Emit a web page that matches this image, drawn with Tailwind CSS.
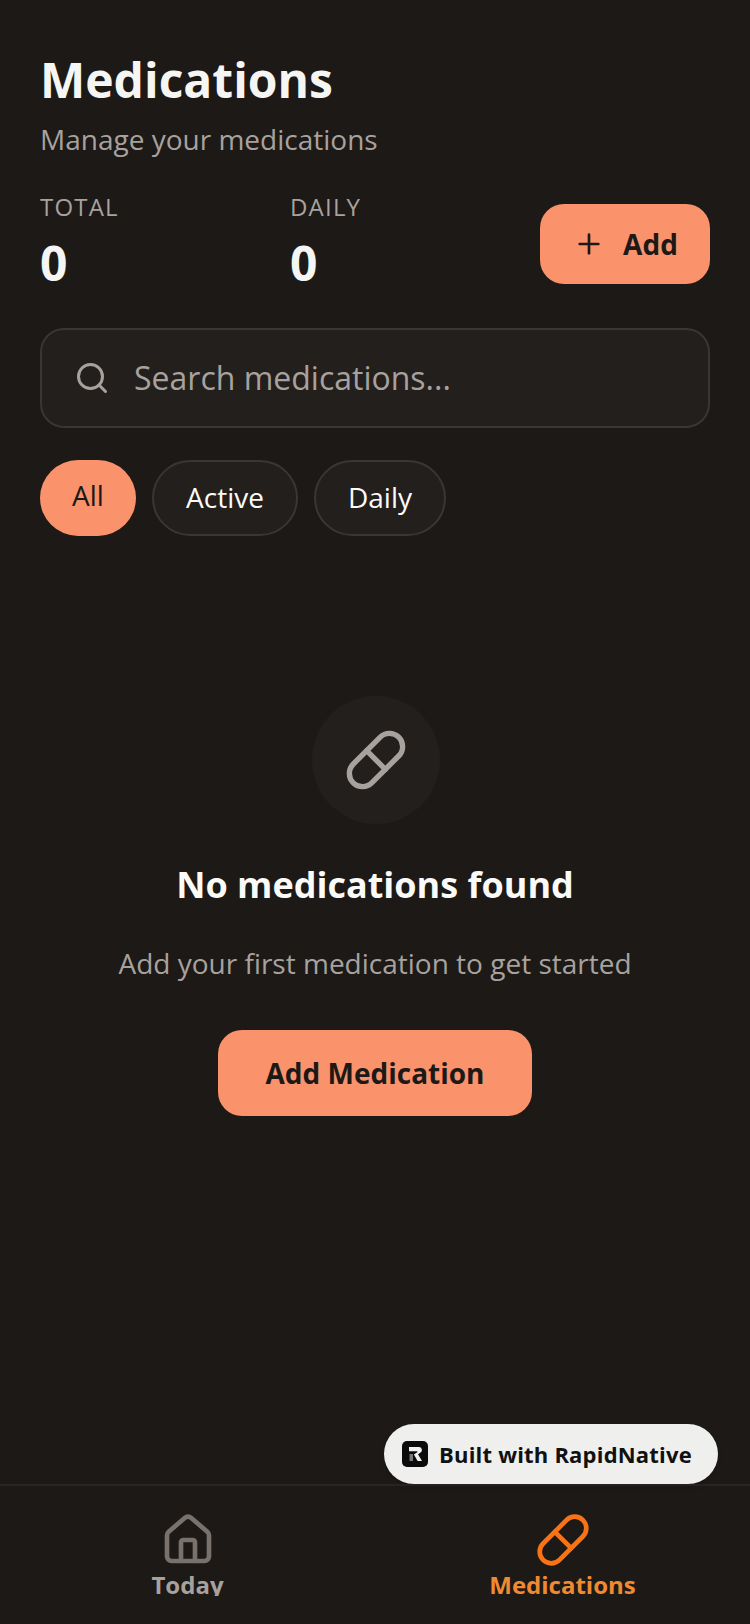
<!DOCTYPE html>
<html lang="en">
<head>
<meta charset="utf-8">
<script src="https://cdn.jsdelivr.net/npm/@tailwindcss/browser@4"></script>
</head>
<body class="m-0">
<div class="relative w-[750px] h-[1624px] overflow-hidden bg-[#1c1917] flex flex-col font-['Open_Sans',sans-serif]">
  <main class="flex-1 flex flex-col px-10 pt-[48px]">
    <h1 class="text-[48px] leading-[64px] font-bold text-[#f5f5f4]">Medications</h1>
    <p class="mt-[8px] text-[28px] leading-[38px] text-[#a8a29e]">Manage your medications</p>
    <div class="mt-[33px] flex items-end justify-between">
      <div class="flex">
        <div class="w-[250px]">
          <div class="text-[24px] leading-[32px] tracking-[1.2px] text-[#a8a29e]">TOTAL</div>
          <div class="mt-[11px] text-[48px] leading-[58px] font-bold text-[#f5f5f4]">0</div>
        </div>
        <div>
          <div class="text-[24px] leading-[32px] tracking-[1.2px] text-[#a8a29e]">DAILY</div>
          <div class="mt-[11px] text-[48px] leading-[58px] font-bold text-[#f5f5f4]">0</div>
        </div>
      </div>
      <button class="mb-[8px] w-[170px] h-[80px] rounded-[24px] bg-[#fa926c] flex items-center justify-center gap-[18px] pl-[1px] text-[28px] font-bold text-[#1c1917]">
        <svg width="32" height="32" viewBox="0 0 24 24" fill="none" stroke="#1c1917" stroke-width="2" stroke-linecap="round" stroke-linejoin="round"><path d="M5 12h14"/><path d="M12 5v14"/></svg>
        <span>Add</span>
      </button>
    </div>
    <div class="mt-[36px] h-[100px] rounded-[24px] border-2 border-[#3a3633] bg-[#231f1d] flex items-center pl-[32px] gap-[24px]">
      <svg width="36" height="36" viewBox="0 0 24 24" fill="none" stroke="#a8a29e" stroke-width="2" stroke-linecap="round" stroke-linejoin="round"><circle cx="11" cy="11" r="8"/><path d="m21 21-4.3-4.3"/></svg>
      <span class="text-[32px] leading-[44px] text-[#a8a29e]">Search medications...</span>
    </div>
    <div class="mt-[32px] flex gap-4">
      <div class="w-[96px] h-[76px] rounded-full bg-[#fa926c] flex items-center justify-center text-[28px] text-[#1c1917] pb-[6px]">All</div>
      <div class="w-[146px] h-[76px] rounded-full border-2 border-[#3a3633] bg-[#231f1d] flex items-center justify-center text-[28px] text-[#fafaf9] pb-[2px]">Active</div>
      <div class="w-[132px] h-[76px] rounded-full border-2 border-[#3a3633] bg-[#231f1d] flex items-center justify-center text-[28px] text-[#fafaf9] pb-[2px]">Daily</div>
    </div>
    <div class="mt-[160px] flex flex-col items-center">
      <div class="ml-[1px] w-[128px] h-[128px] rounded-full bg-[#231f1d] flex items-center justify-center">
        <svg width="64" height="64" viewBox="0 0 24 24" fill="none" stroke="#a8a29e" stroke-width="2" stroke-linecap="round" stroke-linejoin="round"><path d="m10.5 20.5 10-10a4.95 4.95 0 1 0-7-7l-10 10a4.95 4.95 0 1 0 7 7Z"/><path d="m8.5 8.5 7 7"/></svg>
      </div>
      <h2 class="mt-[36px] text-[36px] leading-[50px] font-bold text-[#fafaf9]">No medications found</h2>
      <p class="mt-[34px] text-[28px] leading-[38px] text-[#a8a29e]">Add your first medication to get started</p>
      <button class="mt-[48px] w-[314px] h-[86px] rounded-[24px] bg-[#fa926c] text-[28px] font-bold text-[#1c1917]">Add Medication</button>
    </div>
  </main>
  <div class="absolute left-[384px] top-[1424px] w-[334px] h-[60px] rounded-full bg-[#efefee] flex items-center pl-[18px] gap-[11px] shadow-md">
    <svg width="26" height="26" viewBox="0 0 26 26"><rect width="26" height="26" rx="5" fill="#0b0b0b"/><path d="M7 6h10a3 3 0 0 1 1.600 5.500L16 13.200 20 20h-4.400l-3.700-6.400 3.400-2.300a.6.6 0 0 0-.3-1.100H7Z" fill="#f2f2f2"/><path d="M7.500 13h3.500v7H7.500Z" fill="#777777"/></svg>
    <span class="text-[22px] leading-[32px] font-bold tracking-[0.2px] text-[#111111]">Built with RapidNative</span>
  </div>
  <nav class="h-[140px] border-t-2 border-[#292524] flex">
    <div class="w-[376px] flex flex-col items-center pt-[26px]">
      <svg class="mr-[1px]" width="56" height="56" viewBox="0 0 24 24" fill="none" stroke="#78716c" stroke-width="2" stroke-linecap="round" stroke-linejoin="round"><path d="M15 21v-8a1 1 0 0 0-1-1h-4a1 1 0 0 0-1 1v8"/><path d="M3 10a2 2 0 0 1 .709-1.528l7-5.999a2 2 0 0 1 2.582 0l7 5.999A2 2 0 0 1 21 10v9a2 2 0 0 1-2 2H5a2 2 0 0 1-2-2z"/></svg>
      <div class="mt-[1px] mr-[1px] h-[27px] overflow-hidden text-[24px] leading-[32px] font-bold text-[#a8a29e]">Today</div>
    </div>
    <div class="w-[374px] flex flex-col items-center pt-[26px]">
      <svg class="mr-[1px]" width="56" height="56" viewBox="0 0 24 24" fill="none" stroke="#f97316" stroke-width="2" stroke-linecap="round" stroke-linejoin="round"><path d="m10.5 20.5 10-10a4.95 4.95 0 1 0-7-7l-10 10a4.95 4.95 0 1 0 7 7Z"/><path d="m8.5 8.5 7 7"/></svg>
      <div class="mt-[1px] mr-[1px] h-[32px] overflow-hidden text-[24px] leading-[32px] font-bold text-[#f08a32]">Medications</div>
    </div>
  </nav>
</div>
</body>
</html>
